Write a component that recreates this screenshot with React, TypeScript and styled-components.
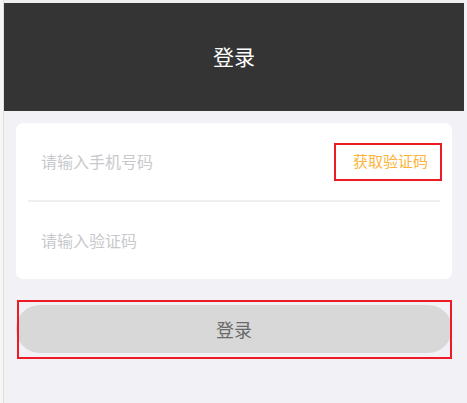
import React from "react";
import styled, {createGlobalStyle} from "styled-components";

const GlobalStyle = createGlobalStyle`
  html, body {
    margin: 0;
    padding: 0;
    background: #f2f2f6;
    font-family: "Noto Sans CJK SC", "Noto Sans", sans-serif;
  }
`;

const Shell = styled.div`
  min-height: 403px;
  border-left: 3px solid #f6f6f4;
  display: flex;
`;

const Page = styled.div`
  width: 460px;
  min-height: 400px;
  padding-top: 3px;
  border-left: 1px solid #dedede;
  background: linear-gradient(#efefef 0 3px, #f2f2f6 3px);
`;

const Header = styled.header`
  height: 108px;
  background: #343434;
  color: #ffffff;
  display: flex;
  align-items: center;
  justify-content: center;
  font-size: 21px;
  padding-bottom: 2px;
  box-sizing: border-box;
`;

const Card = styled.div`
  margin: 12px 12px 0;
  background: #ffffff;
  border-radius: 7px;
  display: flex;
  flex-direction: column;
`;

const Row = styled.div`
  height: 77px;
  display: flex;
  align-items: center;
  padding: 0 10px 0 25px;
`;

const Divider = styled.div`
  height: 2px;
  margin: 0 12px;
  background: #efefef;
`;

const Input = styled.input`
  flex: 1;
  min-width: 0;
  border: none;
  outline: none;
  background: transparent;
  padding: 0 0 2px;
  font-family: inherit;
  font-size: 16px;
  color: #333;

  &::placeholder {
    color: #c8c9cc;
  }
`;

const SendCode = styled.button`
  width: 108px;
  height: 38px;
  margin-top: 1px;
  border: 2px solid #ed1c24;
  background: #ffffff;
  color: #fcb53a;
  font-family: inherit;
  font-size: 15px;
  padding: 0 0 3px 5px;
  cursor: pointer;
`;

const SubmitArea = styled.div`
  position: relative;
  margin: 26px 12px 0;
`;

const SubmitButton = styled.button`
  width: 100%;
  height: 48px;
  border: none;
  border-radius: 24px;
  background: #d8d8d8;
  color: #6a6a6a;
  font-family: inherit;
  font-size: 18px;
  display: flex;
  align-items: center;
  justify-content: center;
`;

const Highlight = styled.div`
  position: absolute;
  top: -5px;
  bottom: -6px;
  left: 1px;
  right: 0;
  border: 2px solid #ed1c24;
  pointer-events: none;
`;

export default function App() {
    return (
        <>
            <GlobalStyle/>
            <Shell>
                <Page>
                    <Header>登录</Header>
                    <Card>
                        <Row>
                            <Input placeholder="请输入手机号码"/>
                            <SendCode>获取验证码</SendCode>
                        </Row>
                        <Divider/>
                        <Row>
                            <Input placeholder="请输入验证码"/>
                        </Row>
                    </Card>
                    <SubmitArea>
                        <SubmitButton>登录</SubmitButton>
                        <Highlight/>
                    </SubmitArea>
                </Page>
            </Shell>
        </>
    );
}
